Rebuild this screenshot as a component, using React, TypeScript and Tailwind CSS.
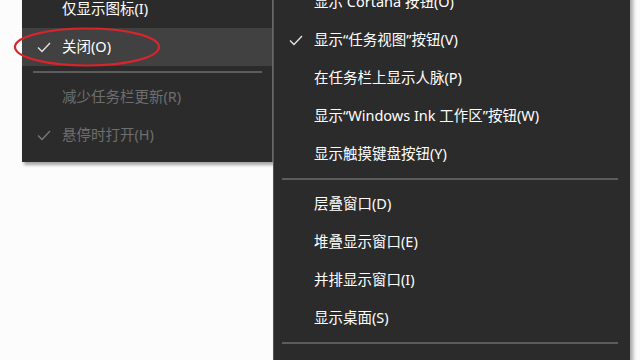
import React from "react";

type Item = { label: string; checked?: boolean; disabled?: boolean; active?: boolean; sep?: boolean };

const leftItems: Item[] = [
  { label: "仅显示图标(I)" },
  { label: "关闭(O)", checked: true, active: true },
  { label: "", sep: true },
  { label: "减少任务栏更新(R)", disabled: true },
  { label: "悬停时打开(H)", checked: true, disabled: true },
];

const rightItems: Item[] = [
  { label: "显示 Cortana 按钮(O)" },
  { label: "显示“任务视图”按钮(V)", checked: true },
  { label: "在任务栏上显示人脉(P)" },
  { label: "显示“Windows Ink 工作区”按钮(W)" },
  { label: "显示触摸键盘按钮(Y)" },
  { label: "", sep: true },
  { label: "层叠窗口(D)" },
  { label: "堆叠显示窗口(E)" },
  { label: "并排显示窗口(I)" },
  { label: "显示桌面(S)" },
  { label: "", sep: true },
  { label: "锁定所有任务栏(L)" },
];

const Check = ({ dim }: { dim?: boolean }) => (
  <svg width="14" height="11" viewBox="0 0 14 11" fill="none">
    <polyline
      points="1,5.5 5,9.5 13,1"
      stroke={dim ? "#7a7a7a" : "#e6e6e6"}
      strokeWidth="1.3"
    />
  </svg>
);

const MenuRow = ({ item, pad }: { item: Item; pad: string }) => {
  if (item.sep) {
    return <div className={`h-[2px] bg-[#5c5c5c] my-[5px] ${pad}`} />;
  }
  return (
    <div
      className={`h-[38px] flex items-center ${item.active ? "bg-[#414141]" : ""}`}
    >
      <div className="w-[40px] flex justify-center pl-[4px]">
        {item.checked && <Check dim={item.disabled} />}
      </div>
      <span
        className={`text-[14.5px] whitespace-nowrap ${item.disabled ? "text-[#6e6e6e]" : "text-white"}`}
      >
        {item.label}
      </span>
    </div>
  );
};

export default function App() {
  return (
    <div
      className="w-[640px] h-[360px] overflow-hidden bg-[#fcfcfc] flex"
      style={{ fontFamily: '"Noto Sans", "Noto Sans CJK SC", sans-serif' }}
    >
      <div className="w-[22px] shrink-0" />
      <div className="w-[251px] shrink-0 self-start">
        <div className="mt-[-10px] bg-[#2b2b2b] border-r border-[#6a6a6a] pb-[8px] shadow-[2px_3px_3px_rgba(0,0,0,0.35)]">
          {leftItems.map((it, i) => (
            <MenuRow key={i} item={it} pad="ml-[11px] mr-[10px]" />
          ))}
        </div>
      </div>
      <div className="w-[357px] shrink-0 relative">
        <div className="mt-[-17px] bg-[#2b2b2b] border-l border-[#555555] h-[400px] shadow-[3px_0_4px_rgba(0,0,0,0.35)]">
          {rightItems.map((it, i) => (
            <MenuRow key={i} item={it} pad="ml-[8px] mr-[12px]" />
          ))}
        </div>
      </div>
      <svg
        className="absolute left-0 top-0 pointer-events-none"
        width="200"
        height="90"
      >
        <ellipse cx="87" cy="47" rx="72" ry="18.5" fill="none" stroke="#d8242b" strokeWidth="2.2" />
      </svg>
    </div>
  );
}
